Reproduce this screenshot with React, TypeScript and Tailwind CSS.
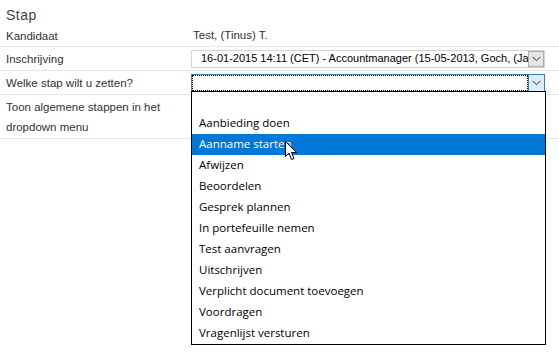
import React from "react";

const opties = [
  "",
  "Aanbieding doen",
  "Aanname starten",
  "Afwijzen",
  "Beoordelen",
  "Gesprek plannen",
  "In portefeuille nemen",
  "Test aanvragen",
  "Uitschrijven",
  "Verplicht document toevoegen",
  "Voordragen",
  "Vragenlijst versturen",
];

const Chevron = () => (
  <svg width="9" height="6" viewBox="0 0 9 6" fill="none">
    <path d="M0.5 0.8 L4.5 4.8 L8.5 0.8" stroke="#333" strokeWidth="1" />
  </svg>
);

const Cursor = () => (
  <svg width="13" height="20" viewBox="0 0 13 20">
    <path
      d="M0.5 0.5 L0.5 15.5 L4 12.2 L6.6 18.5 L9 17.5 L6.5 11.5 L11.5 11.5 Z"
      fill="white"
      stroke="black"
      strokeWidth="1"
    />
  </svg>
);

const Rij = ({
  label,
  children,
  className = "",
}: {
  label: React.ReactNode;
  children?: React.ReactNode;
  className?: string;
}) => (
  <div className={`flex border-b border-[#e6e6e6] ${className}`}>
    <div className="w-[191px] shrink-0 pl-[6px] leading-[20px]">{label}</div>
    <div className="flex-1 flex items-center">{children}</div>
  </div>
);

export default function App() {
  const actief = 2;
  return (
    <div className="w-[559px] h-[357px] bg-white overflow-hidden relative font-['Liberation_Sans',sans-serif] text-[11.5px] text-[#333]">
      <div className="pl-[6px] pt-[6px] h-[25px] text-[14px] tracking-[0.5px] text-[#444] leading-[18px]">Stap</div>
      <Rij label="Kandidaat" className="h-[22px] items-center">
        <span className="pl-[2px]">Test, (Tinus) T.</span>
      </Rij>
      <Rij label="Inschrijving" className="h-[24px] items-center">
        <div className="w-[354px] h-[18px] flex items-center border border-[#d4d4d4] bg-white text-[11px] text-black">
          <span className="flex-1 pl-[9px] whitespace-nowrap overflow-hidden">
            16-01-2015 14:11 (CET) - Accountmanager (15-05-2013, Goch, (Jan
          </span>
          <span className="w-[16px] h-[16px] flex items-center justify-center bg-[#e5e5e5] border border-[#adadad]">
            <Chevron />
          </span>
        </div>
      </Rij>
      <Rij label="Welke stap wilt u zetten?" className="h-[24px] items-center">
        <div className="relative w-[354px] h-[18px] flex items-center border border-[#3c7fb1] bg-white">
          <span className="flex-1 h-[16px] border border-dotted border-black"></span>
          <span className="w-[16px] h-[16px] flex items-center justify-center bg-[#dcecfc] border-l border-[#3c7fb1]">
            <Chevron />
          </span>
        </div>
      </Rij>
      <Rij label={<>Toon algemene stappen in het<br />dropdown menu</>} className="h-[44px] pt-[2px] items-start">
      </Rij>

      {/* opengeklapte dropdown */}
      <div className="absolute left-[191px] top-[91px] w-[355px] border border-black bg-white font-['Open_Sans',sans-serif] text-[11.5px] text-black">
        {opties.map((o, i) => (
          <div
            key={i}
            className={`h-[21px] pl-[7px] leading-[20px] whitespace-nowrap ${i === actief ? "bg-[#0078d7] text-white" : ""}`}
          >
            {o}
          </div>
        ))}
      </div>
      <div className="absolute left-[285px] top-[141px]">
        <Cursor />
      </div>
    </div>
  );
}
